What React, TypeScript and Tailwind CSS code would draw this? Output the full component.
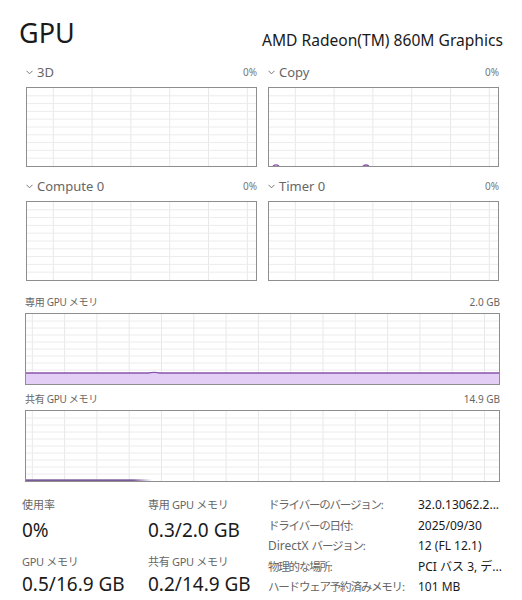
import React from "react";

const PURPLE = "#8a56ad";
const FILL = "#e3cff5";

function Grid({ w, h, xOff, xStep, xCount, rows }: { w: number; h: number; xOff: number; xStep: number; xCount: number; rows: number }) {
  const vs = Array.from({ length: xCount }, (_, i) => xOff + i * xStep);
  const hs = Array.from({ length: rows - 1 }, (_, i) => ((i + 1) * h) / rows);
  return (
    <g>
      {vs.map((x, i) => (
        <line key={"v" + i} x1={x} y1={0} x2={x} y2={h} stroke="#e8e8e8" strokeWidth={1} />
      ))}
      {hs.map((y, i) => (
        <line key={"h" + i} x1={0} y1={y} x2={w} y2={y} stroke="#ececec" strokeWidth={1} />
      ))}
    </g>
  );
}

function Chevron() {
  return (
    <svg width="7" height="5" viewBox="0 0 7 5" className="mr-[4px] mt-[1px]">
      <path d="M0.5 0.8 L3.5 3.8 L6.5 0.8" fill="none" stroke="#777" strokeWidth="1" />
    </svg>
  );
}

function EngineChart({ label, children }: { label: string; children?: React.ReactNode }) {
  const w = 229;
  const h = 78;
  return (
    <div className="flex flex-col">
      <div className="flex h-[20px] items-center justify-between">
        <div className="flex items-center text-[13px] leading-[20px] text-[#666]">
          <Chevron />
          <span>{label}</span>
        </div>
        <span className="text-[10px] text-[#777]">0%</span>
      </div>
      <div className="mt-[5px] h-[80px] border border-[#8e8e8e] bg-white">
        <svg width={w} height={h} viewBox={`0 0 ${w} ${h}`} className="block">
          <Grid w={w} h={h} xOff={26.3} xStep={38.8} xCount={6} rows={10} />
          {children}
        </svg>
      </div>
    </div>
  );
}

function MemChart({ label, value, h, children }: { label: string; value: string; h: number; children?: React.ReactNode }) {
  const w = 473;
  return (
    <div className="-ml-px flex w-[475px] flex-col">
      <div className="flex h-[16px] items-center justify-between text-[10px] text-[#666]">
        <span className="tracking-[-0.3px]">{label}</span>
        <span>{value}</span>
      </div>
      <div className="mt-[3px] border border-[#8e8e8e] bg-white" style={{ height: h + 2 }}>
        <svg width={w} height={h} viewBox={`0 0 ${w} ${h}`} className="block">
          <Grid w={w} h={h} xOff={6.3} xStep={32.3} xCount={15} rows={10} />
          {children}
        </svg>
      </div>
    </div>
  );
}

export default function App() {
  const jp = "font-['Noto_Sans','Noto_Sans_CJK_JP',sans-serif]";
  const lbl = "whitespace-nowrap text-[11.5px] tracking-[-1.2px] text-[#666]";
  return (
    <div className={`h-[600px] w-[522px] overflow-hidden bg-white text-[#1a1a1a] ${jp}`}>
      <div className="flex h-[62px] justify-between pl-[19px] pr-[19px]">
        <div className="pt-[17px] text-[27px] leading-[32px]">GPU</div>
        <div className="pt-[30px] text-[15.6px] leading-[20px]">AMD Radeon(TM) 860M Graphics</div>
      </div>
      <div className="pl-[26px] pr-[23px]">
        <div className="grid grid-cols-2 gap-x-[11px] gap-y-[9px]">
          <EngineChart label="3D" />
          <EngineChart label="Copy">
            <path d="M4 78 Q7 75.8 10 78" fill="none" stroke={PURPLE} strokeWidth={1.4} />
            <path d="M94 78 Q97 76 100 78" fill="none" stroke={PURPLE} strokeWidth={1.4} />
          </EngineChart>
          <EngineChart label="Compute 0" />
          <EngineChart label="Timer 0" />
        </div>
        <div className="mt-[13px]">
          <MemChart label="専用 GPU メモリ" value="2.0 GB" h={70}>
            <path d="M0 59 L122 59 Q128 57.6 134 59 L473 59 L473 70 L0 70 Z" fill={FILL} />
            <path d="M0 59 L122 59 Q128 57.6 134 59 L473 59" fill="none" stroke={PURPLE} strokeWidth={1.3} />
          </MemChart>
        </div>
        <div className="mt-[6px]">
          <MemChart label="共有 GPU メモリ" value="14.9 GB" h={70}>
            <defs>
              <linearGradient id="fade" x1="0" x2="1" y1="0" y2="0">
                <stop offset="0" stopColor="#7a5a99" stopOpacity="1" />
                <stop offset="0.85" stopColor="#7a5a99" stopOpacity="1" />
                <stop offset="1" stopColor="#7a5a99" stopOpacity="0" />
              </linearGradient>
            </defs>
            <rect x={0} y={68.3} width={126} height={1.7} fill="url(#fade)" />
          </MemChart>
        </div>
      </div>
      <div className="mt-[15px] flex pl-[22px]">
        <div className="w-[126px]">
          <div className="text-[11px] leading-[16px] text-[#666]">使用率</div>
          <div className="mt-[4px] text-[19px] leading-[26px]">0%</div>
          <div className="mt-[11px] text-[11px] leading-[16px] tracking-[-0.3px] text-[#666]">GPU メモリ</div>
          <div className="mt-[1px] text-[19px] leading-[26px]">0.5/16.9 GB</div>
        </div>
        <div className="w-[120px]">
          <div className="text-[11px] leading-[16px] tracking-[-0.3px] text-[#666]">専用 GPU メモリ</div>
          <div className="mt-[4px] text-[19px] leading-[26px]">0.3/2.0 GB</div>
          <div className="mt-[11px] text-[11px] leading-[16px] tracking-[-0.3px] text-[#666]">共有 GPU メモリ</div>
          <div className="mt-[1px] text-[19px] leading-[26px]">0.2/14.9 GB</div>
        </div>
        <div className="-mt-[2px] grid grid-cols-[150px_1fr] text-[12px] leading-[20.5px]">
          <span className={lbl}>ドライバーのバージョン:</span>
          <span className="whitespace-nowrap">32.0.13062.2...</span>
          <span className={lbl}>ドライバーの日付:</span>
          <span className="whitespace-nowrap">2025/09/30</span>
          <span className={lbl}>
            <span className="text-[12px] tracking-normal">DirectX </span>バージョン:
          </span>
          <span className="whitespace-nowrap">12 (FL 12.1)</span>
          <span className={lbl}>物理的な場所:</span>
          <span className="whitespace-nowrap">PCI バス 3, デ...</span>
          <span className={lbl}>ハードウェア予約済みメモリ:</span>
          <span className="whitespace-nowrap">101 MB</span>
        </div>
      </div>
    </div>
  );
}
